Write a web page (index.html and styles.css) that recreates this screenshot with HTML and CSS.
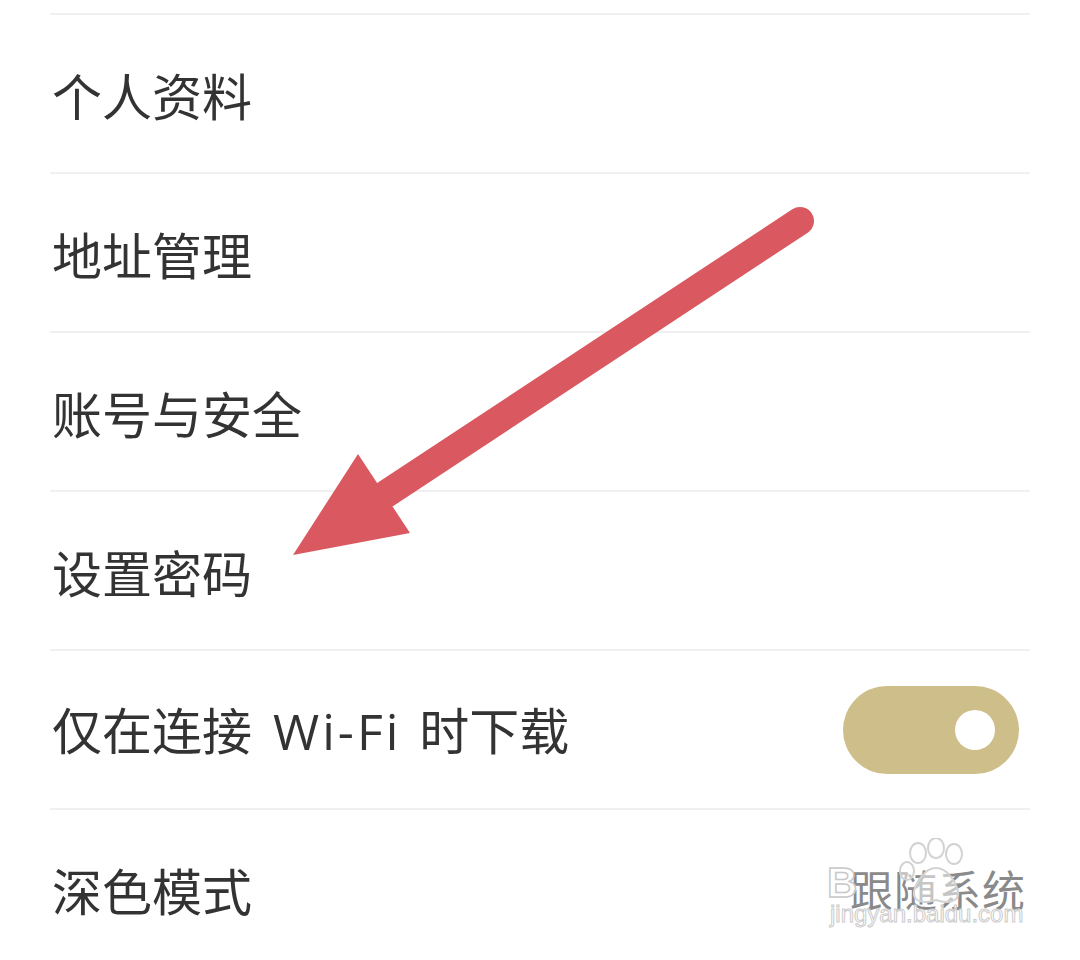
FILE: index.html
```html
<!DOCTYPE html>
<html>
<head>
<meta charset="UTF-8">
<title>设置</title>
<link rel="stylesheet" href="styles.css">
</head>
<body>

<div class="page">
	<!-- 设置列表 -->
	<ul class="settings">
		<li class="row"><span class="label">个人资料</span></li>
		<li class="row"><span class="label">地址管理</span></li>
		<li class="row"><span class="label">账号与安全</span></li>
		<li class="row"><span class="label">设置密码</span></li>
		<li class="row">
			<span class="label">仅在连接<span class="latin">Wi-Fi</span>时下载</span>
			<span class="switch on"><span class="knob"></span></span>
		</li>
		<li class="row">
			<span class="label">深色模式</span>
			<span class="value">跟随系统</span>
		</li>
	</ul>

	<!-- 红色箭头标注 -->
	<svg class="arrow" width="1080" height="960" viewBox="0 0 1080 960">
		<line x1="386" y1="494" x2="800" y2="221" stroke="#da585f" stroke-width="28" stroke-linecap="round"/>
		<polygon points="358,454 410,533 293,555" fill="#da585f"/>
	</svg>

	<!-- 水印 -->
	<div class="watermark">
		<svg class="paw" width="80" height="68" viewBox="0 0 80 68">
			<g fill="rgba(255,255,255,0.5)" stroke="#d2d2d2" stroke-width="2">
				<ellipse cx="22" cy="15" rx="8" ry="10"/>
				<ellipse cx="40" cy="10" rx="8" ry="10"/>
				<ellipse cx="58" cy="16" rx="8" ry="10"/>
				<ellipse cx="11" cy="33" rx="7" ry="9"/>
				<path d="M40 30 C28 30 20 45 18 53 C16 64 28 66 40 62 C52 66 64 64 62 53 C60 45 52 30 40 30 Z"/>
			</g>
		</svg>
		<span class="wm-b">B</span>
		<span class="wm-url">jingyan.baidu.com</span>
	</div>
</div>

</body>
</html>
```

FILE: styles.css
```css
body{
	margin:0;
	background-color:#ffffff;
	font-family:"Noto Sans CJK SC", "Noto Sans", sans-serif;
}
.page{
	position:relative;
	width:1080px; height:960px;
	overflow:hidden;
}
.settings{
	list-style:none;
	margin:13px 0 0 0; padding:0 50px;
}
.row{
	height:157px;
	border-top:2px solid #f0f0f0;
	display:flex; align-items:center;
	justify-content:space-between;
}
.label{
	font-size:50px; color:#333333;
	line-height:1; padding-left:2px;
}
.latin{
	font-family:"Open Sans", sans-serif;
	letter-spacing:3px;
	margin:0 18px 0 21px;
}
.switch{
	width:176px; height:88px;
	border-radius:44px;
	background-color:#cebe89;
	display:flex; align-items:center;
	justify-content:flex-end;
	margin-right:11px;
}
.knob{
	width:40px; height:40px;
	border-radius:50%;
	background-color:#ffffff;
	margin-right:24px;
}
.value{
	font-size:43px; color:#8a8a8a;
	line-height:1; margin-right:4px;
	letter-spacing:1px;
}
.arrow{
	position:absolute; left:0; top:0;
}
.watermark{
	position:absolute; left:826px; top:836px;
	width:210px; height:100px;
}
.paw{
	position:absolute; left:70px; top:2px;
}
.wm-b{
	position:absolute; left:1px; top:26px;
	font-family:"Liberation Sans", sans-serif;
	font-size:42px; font-weight:bold;
	line-height:1;
	color:rgba(255,255,255,0.6);
	-webkit-text-stroke:1.5px #c8c8c8;
}
.wm-url{
	position:absolute; left:4px; top:66px;
	font-family:"Liberation Sans", sans-serif;
	font-size:24px; line-height:1;
	color:rgba(255,255,255,0.7);
	-webkit-text-stroke:1px #cccccc;
}
```
